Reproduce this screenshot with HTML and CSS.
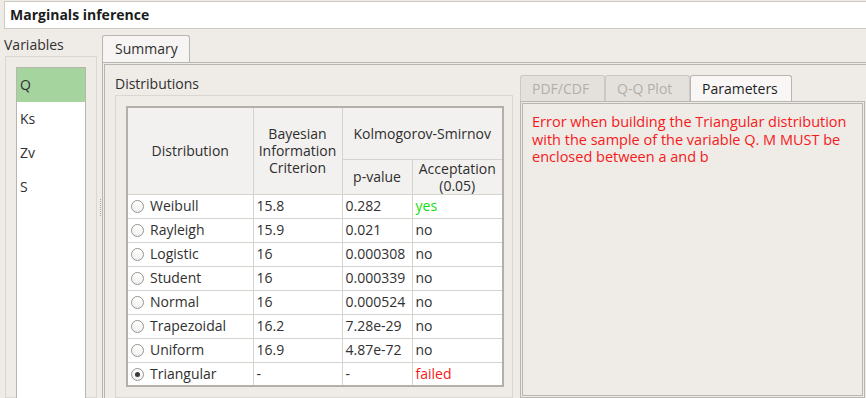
FILE: index.html
```html
<!DOCTYPE html>
<html lang="en">
<head>
    <meta charset="UTF-8">
    <meta name="viewport" content="width=device-width, initial-scale=1.0">
    <title>Marginals inference</title>
    <link rel="stylesheet" href="styles.css">
</head>
<body>
    <div class="title">Marginals inference</div>
    <div class="main">
        <div class="vars">
            <div class="vars-label">Variables</div>
            <div class="group vars-group">
                <ul class="var-list">
                    <li class="sel">Q</li>
                    <li>Ks</li>
                    <li>Zv</li>
                    <li>S</li>
                </ul>
            </div>
        </div>
        <div class="splitter"><span></span></div>
        <div class="tabwidget">
            <div class="tabbar">
                <div class="tab active">Summary</div>
            </div>
            <div class="pane summary">
                <div class="dist">
                    <div class="dist-label">Distributions</div>
                    <div class="group dist-group">
                        <table class="dist-table">
                            <colgroup>
                                <col class="c1"><col class="c2"><col class="c3"><col class="c4">
                            </colgroup>
                            <thead>
                                <tr class="h1">
                                    <th rowspan="2">Distribution</th>
                                    <th rowspan="2">Bayesian<br>Information<br>Criterion</th>
                                    <th colspan="2">Kolmogorov-Smirnov</th>
                                </tr>
                                <tr class="h2">
                                    <th>p-value</th>
                                    <th>Acceptation<br>(0.05)</th>
                                </tr>
                            </thead>
                            <tbody>
                                <tr><td><span class="radio"></span>Weibull</td><td>15.8</td><td>0.282</td><td class="yes">yes</td></tr>
                                <tr><td><span class="radio"></span>Rayleigh</td><td>15.9</td><td>0.021</td><td>no</td></tr>
                                <tr><td><span class="radio"></span>Logistic</td><td>16</td><td>0.000308</td><td>no</td></tr>
                                <tr><td><span class="radio"></span>Student</td><td>16</td><td>0.000339</td><td>no</td></tr>
                                <tr><td><span class="radio"></span>Normal</td><td>16</td><td>0.000524</td><td>no</td></tr>
                                <tr><td><span class="radio"></span>Trapezoidal</td><td>16.2</td><td>7.28e-29</td><td>no</td></tr>
                                <tr><td><span class="radio"></span>Uniform</td><td>16.9</td><td>4.87e-72</td><td>no</td></tr>
                                <tr><td><span class="radio checked"></span>Triangular</td><td>-</td><td>-</td><td class="failed">failed</td></tr>
                            </tbody>
                        </table>
                    </div>
                </div>
                <div class="side">
                    <div class="tabbar small">
                        <div class="tab off">PDF/CDF</div>
                        <div class="tab off">Q-Q Plot</div>
                        <div class="tab on">Parameters</div>
                    </div>
                    <div class="pane params">
                        <p class="error">Error when building the Triangular distribution<br>with the sample of the variable Q. M MUST be<br>enclosed between a and b</p>
                    </div>
                </div>
            </div>
        </div>
    </div>
</body>
</html>
```

FILE: styles.css
```css
* {margin: 0; padding: 0; box-sizing: border-box;}
body {width: 866px; height: 398px; overflow: hidden; background: #efebe7;
    font: 14px "Open Sans", "Liberation Sans", sans-serif; color: #303030;}

/* title bar */
.title {margin: 1px -10px 0 4px; height: 28px; background: #fff; border: 1px solid #cdc9c4;
    padding-left: 5px; line-height: 26px; font-weight: bold; color: #1c1c1c;}

.main {display: flex; height: 369px; overflow: hidden;}

/* variables column */
.vars {flex: none; width: 97px; padding-top: 7px;}
.vars-label {line-height: 18px; padding-left: 4px; margin-bottom: 2px;}
.group {border: 1px solid #dad6d1;}
.vars-group {margin-left: 5px; width: 92px; height: 342px; padding: 10px 10px 0;}
.var-list {list-style: none; background: #fff; border: 1px solid #b9b5b0; border-bottom: none; height: 331px;}
.var-list li {height: 34px; line-height: 34px; padding-left: 3px;}
.var-list li.sel {background: #a6d49e;}

.splitter {flex: none; width: 5px; display: flex; align-items: center;}
.splitter span {display: block; width: 1px; height: 17px; margin-left: 3px; margin-top: -12px;
    border-left: 1px dotted #aaa6a1;}

/* tab widgets */
.tabwidget {flex: none; width: 770px;}
.tabbar {display: flex; padding-top: 6px; height: 33px;}
.tab {height: 27px; padding: 0 12px; line-height: 26px; border: 1px solid #b9b5b0;
    border-bottom: none; border-radius: 3px 3px 0 0; background: #f6f5f3;}
.tabbar .active {width: 88px;}
.pane {border: 3px double #b8b4af;}
.summary {display: flex; gap: 7px; height: 336px; padding: 0 0 0 10px; border-bottom: none;}

.dist {flex: none; width: 398px;}
.dist-label {line-height: 18px; padding-top: 10px; margin-bottom: 2px;}
.dist-group {height: 303px; padding: 10px 10px 0 10px;}

.dist-table {width: 376px; table-layout: fixed; border-collapse: collapse; border: 2px solid #b3afaa;
    background: #fff;}
.dist-table .c1 {width: 126px;}
.dist-table .c2 {width: 89px;}
.dist-table .c3 {width: 70px;}
.dist-table .c4 {width: 91px;}
.dist-table th, .dist-table td {border: 1px solid #d6d2ce; white-space: nowrap; overflow: hidden;}
.dist-table th {background: #f2f1ef; font-weight: normal; line-height: 17px; color: #2e2e2e;}
.dist-table .h1 th {height: 52px;}
.dist-table .h2 th {height: 35px;}
.dist-table td {height: 24px; padding: 0 3px; line-height: 22px;}
.dist-table .yes {color: #11e011;}
.dist-table .failed {color: #f51a1a;}

.radio {display: inline-block; width: 13px; height: 13px; border: 1px solid #979592; border-radius: 50%;
    background: linear-gradient(#ffffff, #f0efed); margin-right: 6px; vertical-align: -2px; position: relative;}
.radio.checked::after {content: ""; position: absolute; left: 3px; top: 3px; width: 5px; height: 5px;
    border-radius: 50%; background: #3a3a3a;}

.side {flex: none; width: 345px; padding-top: 10px;}
.tabbar.small {padding-top: 0; height: 26px;}
.tabbar.small .tab {height: 26px; line-height: 25px; padding: 0 11px;}
.tab.off {background: #e4e1dd; color: #b2aeaa; border-color: #ccc8c3; width: 85px;}
.tab.on {background: #f8f7f6; color: #1f1f1f; width: 102px;}
.params {height: 297px; padding: 9px 9px 0 9px;}
.error {color: #f51a1a; font-size: 14.5px; line-height: 17.5px; white-space: nowrap;}
```
